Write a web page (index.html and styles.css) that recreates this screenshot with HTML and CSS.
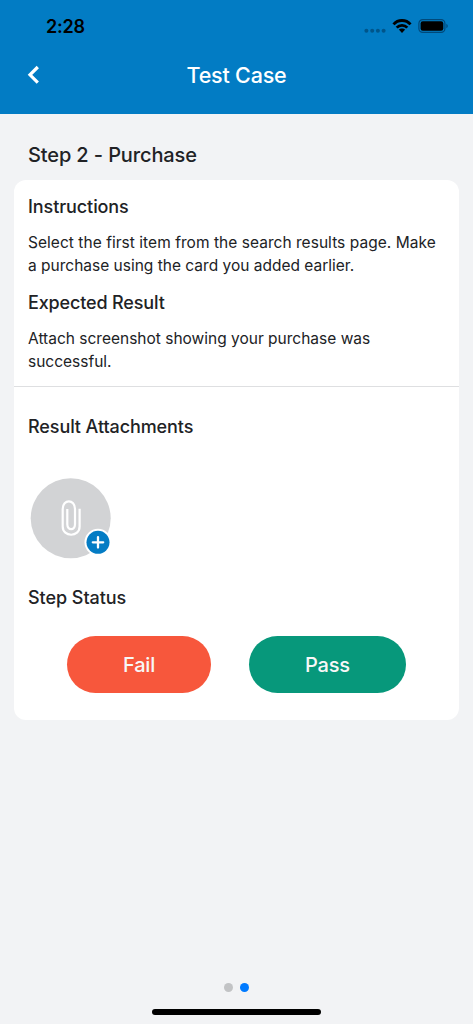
FILE: index.html
```html
<!DOCTYPE html>
<html lang="en">
<head>
<meta charset="utf-8">
<title>Test Case</title>
<link rel="stylesheet" href="styles.css">
</head>
<body>
<div class="screen">
  <header class="header">
    <div class="status-bar">
      <span class="time">2:28</span>
      <svg class="status-icons" width="86" height="18" viewBox="0 0 86 18">
        <g fill="#00558a">
          <circle cx="3.4" cy="13.7" r="2"/><circle cx="9.2" cy="13.7" r="2"/><circle cx="14.9" cy="13.7" r="2"/><circle cx="20.6" cy="13.7" r="2"/>
        </g>
        <g fill="none" stroke="#000" stroke-width="2.8">
          <path d="M30.5 7.3C34.9 2.2 43.1 2.2 47.5 7.3"/>
          <path d="M33.7 10.6C36.5 7.5 41.5 7.5 44.3 10.6"/>
        </g>
        <path d="M35.8 12.6C37.4 11 40.6 11 42.2 12.6L39 16Z"/>
        <rect x="55.9" y="2.6" width="26" height="12.8" rx="3.8" fill="none" stroke="#00497a" stroke-width="1.2"/>
        <rect x="57.6" y="4.2" width="22.7" height="9.5" rx="2.2"/>
        <path d="M83.4 6.8C85.2 7.6 85.2 10.4 83.4 11.2Z" fill="#00497a"/>
      </svg>
    </div>
    <nav class="nav-bar">
      <svg class="back" width="14" height="20" viewBox="0 0 14 20"><path d="M11.8 2L4 9.8L11.8 17.6" fill="none" stroke="#fff" stroke-width="3.2"/></svg>
      <h1 class="title">Test Case</h1>
    </nav>
  </header>
  <main class="content">
    <h2 class="step-title">Step 2 - Purchase</h2>
    <div class="card">
      <section class="details">
        <h3 class="heading instructions">Instructions</h3>
        <p class="text"><span class="line-a">Select the first item from the search results page. Make</span><br><span class="line-b">a purchase using the card you added earlier.</span></p>
        <h3 class="heading expected">Expected Result</h3>
        <p class="text"><span class="line-c">Attach screenshot showing your purchase was</span><br><span class="line-d">successful.</span></p>
      </section>
      <section class="results">
        <h3 class="heading attachments">Result Attachments</h3>
        <svg class="attach" width="82" height="82" viewBox="0 0 82 82">
          <circle cx="40.7" cy="41.3" r="40" fill="#d2d3d5"/>
          <path d="M49.6 31.7V49.5C49.6 60.5 32.7 60.5 32.7 49.5V32C32.7 21.8 45 21.8 45 32V47.3C45 53.7 37.3 53.7 37.3 47.3V32" fill="none" stroke="#fff" stroke-width="2.2"/>
          <circle cx="68" cy="65.3" r="13.5" fill="#fff"/>
          <circle cx="68" cy="65.3" r="11.5" fill="#047cc4"/>
          <path d="M68 60.1V70.5M62.8 65.3H73.2" fill="none" stroke="#fff" stroke-width="2.3" stroke-linecap="round"/>
        </svg>
        <h3 class="heading status">Step Status</h3>
        <div class="actions">
          <button class="button fail">Fail</button>
          <button class="button pass">Pass</button>
        </div>
      </section>
    </div>
  </main>
  <footer class="footer">
    <div class="pages"><i class="dot"></i><i class="dot active"></i></div>
    <div class="home-bar"></div>
  </footer>
</div>
</body>
</html>
```
FILE: styles.css
```css
* { box-sizing: border-box; }
body { margin: 0; font-family: Inter, "Liberation Sans", sans-serif; color: #212225; }
h1, h2, h3, p { margin: 0; }
svg { display: block; }
.screen { width: 473px; height: 1024px; display: flex; flex-direction: column; background: #f2f3f5; overflow: hidden; }
.header { height: 114px; flex: none; background: #027cc4; }
.status-bar { display: flex; justify-content: space-between; height: 52px; padding: 17px 24px 0 46px; color: #000; }
.time { font-size: 18px; line-height: 20px; font-weight: 600; letter-spacing: -0.2px; }
.nav-bar { display: grid; grid-template-columns: 60px 1fr 60px; align-items: center; height: 46px; }
.back { margin-left: 26px; }
.title { text-align: center; color: #fff; font-size: 21.5px; line-height: 28px; font-weight: 500; letter-spacing: -0.2px; white-space: nowrap; }
.content { flex: 1; padding: 0 14px; }
.step-title { height: 66px; padding: 27px 14px 0; font-size: 20px; line-height: 29px; font-weight: 500; letter-spacing: -0.12px; }
.card { height: 540px; border-radius: 12px; background: #fff; }
.details { height: 207px; padding: 15px 14px 0; border-bottom: 1px solid #dedfe1; }
.heading { font-size: 18px; line-height: 24px; font-weight: 500; letter-spacing: -0.09px; white-space: nowrap; }
.text { margin-top: 12px; font-size: 15.5px; line-height: 23px; white-space: nowrap; }
.line-a { letter-spacing: 0.04px; }
.expected { margin-top: 14px; letter-spacing: -0.15px; }
.results { padding: 28px 14px 0; }
.attach { margin: 38px 0 0 2px; }
.status { margin-top: 27px; letter-spacing: -0.05px; }
.actions { display: flex; justify-content: space-between; padding: 26px 39px 0; }
.button { height: 57px; padding: 0; border: 0; border-radius: 29px; color: #f7f7f7; font: 500 20px/28px Inter, "Liberation Sans", sans-serif; letter-spacing: -0.2px; }
.fail { width: 144px; background: #f7573c; }
.pass { width: 157px; background: #07987b; }
.footer { padding-bottom: 9px; display: flex; flex-direction: column; align-items: center; }
.pages { display: flex; gap: 7px; }
.dot { width: 9px; height: 9px; border-radius: 50%; background: #c2c3c5; }
.active { background: #007aff; }
.home-bar { width: 169px; height: 6px; margin-top: 17px; border-radius: 3px; background: #000; }
```
